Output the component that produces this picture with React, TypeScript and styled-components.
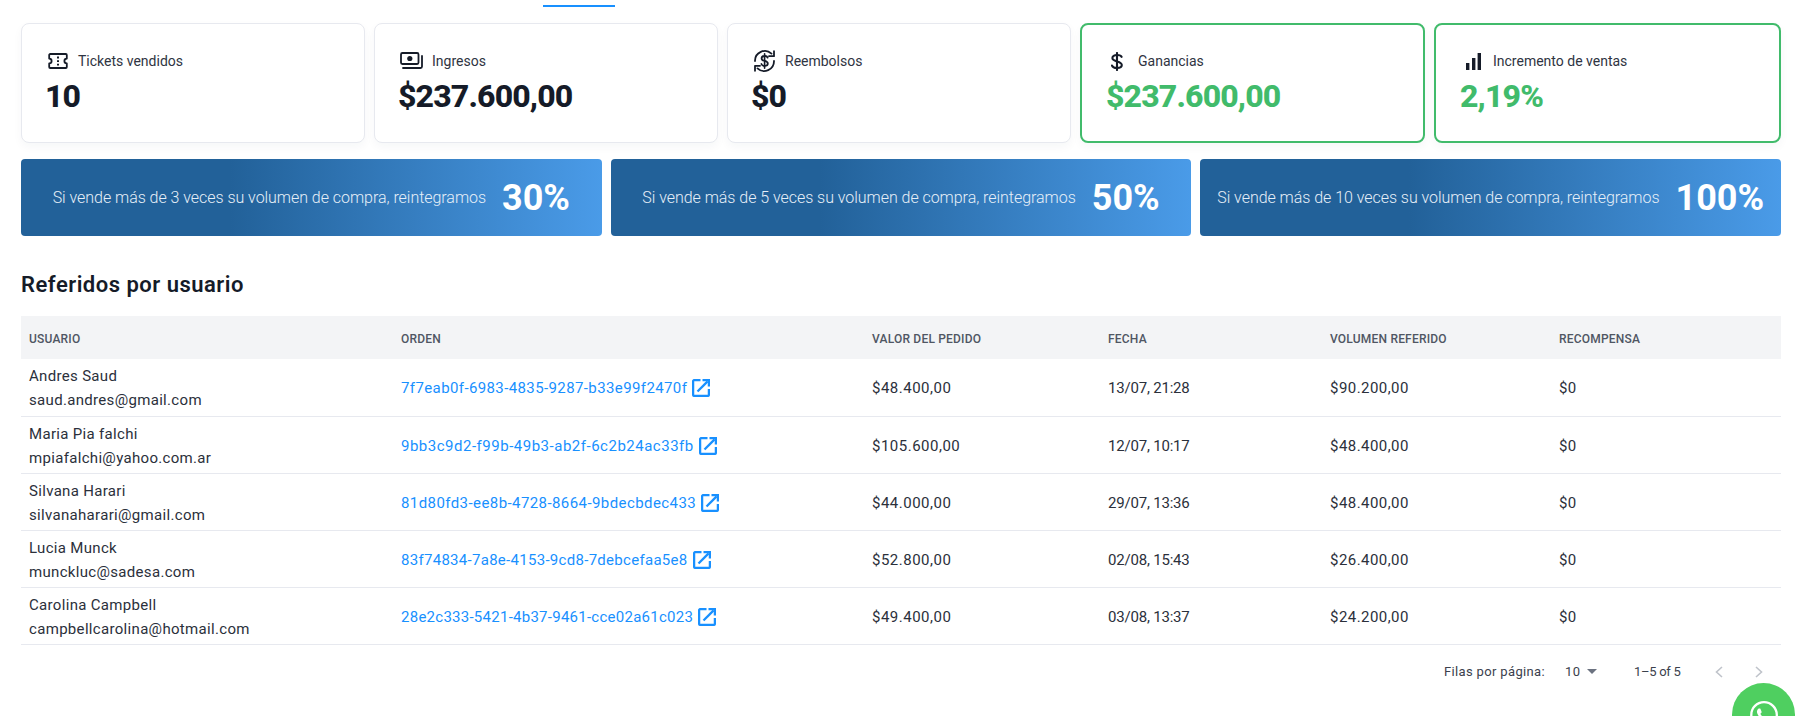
import React from "react";
import styled, { createGlobalStyle } from "styled-components";
import { FaWhatsapp } from "react-icons/fa";

const Global = createGlobalStyle`
  html, body { margin: 0; padding: 0; background: #fff; height: 100%; overflow: hidden; }
  * { box-sizing: border-box; }
  body { font-family: Roboto, "Liberation Sans", sans-serif; color: #2b303b; }
`;

const Page = styled.div`
  padding: 0 32px 0 21px;
  height: 716px;
  position: relative;
  overflow: hidden;
`;
const TabBar = styled.div`
  height: 7px;
  padding: 5px 0 0 522px;
`;
const TabIndicator = styled.div`
  width: 72px;
  height: 2px;
  background: #1890ff;
`;
const CardRow = styled.div`
  display: grid;
  grid-template-columns: 344px 344px 344px 345px 1fr;
  gap: 9px;
  margin-top: 16px;
`;
const Card = styled.div<{ $hl?: boolean }>`
  height: 120px;
  border-radius: 8px;
  background: #fff;
  border: ${(p) => (p.$hl ? "2px solid #41bb6b" : "1px solid #e7e9ef")};
  box-shadow: 0 4px 10px rgba(30, 40, 70, 0.04);
  padding: ${(p) => (p.$hl ? "23px 0 0 24px" : "24px 0 0 25px")};
`;
const CardHead = styled.div<{ $pad: number; $gap: number }>`
  display: flex;
  align-items: center;
  height: 26px;
  padding-left: ${(p) => p.$pad}px;
  gap: ${(p) => p.$gap}px;
  font-size: 14px;
  color: #2f3442;
`;
const IconSlot = styled.span<{ $w: number }>`
  width: ${(p) => p.$w}px;
  display: flex;
  justify-content: center;
  flex: none;
  color: #151b28;
`;
const CardValue = styled.div<{ $hl?: boolean }>`
  font-size: 32px;
  line-height: 38px;
  margin: 3px 0 0 ${(p) => (p.$hl ? "0" : "-2px")};
  font-weight: 800;
  letter-spacing: -0.85px;
  color: ${(p) => (p.$hl ? "#41bb6b" : "#151b28")};
`;
const BannerRow = styled.div`
  display: grid;
  grid-template-columns: repeat(3, 1fr);
  gap: 9px;
  margin-top: 16px;
`;
const Banner = styled.div`
  height: 77px;
  border-radius: 4px;
  background: linear-gradient(90deg, #226199 0%, #226199 36%, #4a9be8 100%);
  color: #fff;
  display: flex;
  align-items: center;
  justify-content: center;
  gap: 16px;
`;
const BannerText = styled.span`
  font-size: 16px;
  font-weight: 300;
  letter-spacing: -0.04px;
  color: #e6eff8;
`;
const BannerPct = styled.span`
  font-size: 36px;
  font-weight: 700;
  color: #fff;
`;
const Title = styled.h2`
  margin: 35px 0 17px;
  font-size: 22px;
  line-height: 28px;
  font-weight: 600;
  letter-spacing: 0.5px;
  color: #151b28;
`;
const Table = styled.table`
  width: 100%;
  table-layout: fixed;
  border-collapse: collapse;
`;
const Col = styled.col<{ $w: number }>`
  width: ${(p) => p.$w}px;
`;
const HeadCell = styled.th`
  height: 43px;
  background: #f3f4f6;
  padding: 3px 8px 0;
  text-align: left;
  font-size: 12px;
  font-weight: 500;
  letter-spacing: 0.2px;
  text-transform: uppercase;
  color: #4f5663;
`;
const Row = styled.tr`
  height: 57px;
  border-bottom: 1px solid #e7e9ef;
`;
const Cell = styled.td<{ $ls?: number }>`
  padding: 2px 8px 0;
  font-size: 15px;
  line-height: 24px;
  letter-spacing: ${(p) => p.$ls ?? 0.32}px;
  color: #2b303b;
`;
const Line = styled.div`
  white-space: nowrap;
`;
const OrderLink = styled.a<{ $ls: number }>`
  display: inline-flex;
  align-items: center;
  gap: 5px;
  color: #1890ff;
  font-size: 15px;
  letter-spacing: ${(p) => p.$ls}px;
  text-decoration: none;
`;
const Pager = styled.div`
  display: flex;
  align-items: center;
  height: 54px;
  font-size: 13px;
  letter-spacing: 0.35px;
  color: #3b414d;
  padding-left: 1423px;
`;
const PagerLabel = styled.span`
  flex: 0 0 121px;
  white-space: nowrap;
`;
const PagerSelect = styled.span`
  flex: 0 0 69px;
  display: flex;
  align-items: center;
  gap: 7px;
`;
const PagerCount = styled.span`
  flex: 0 0 81px;
  white-space: nowrap;
  letter-spacing: -0.3px;
`;
const PagerArrow = styled.svg`
  width: 8px;
  height: 12px;
  margin-right: 32px;
  flex: none;
  fill: none;
  stroke: #bfc3ca;
  stroke-width: 1.6;
`;
const Fab = styled.div`
  position: absolute;
  left: 1732px;
  top: 683px;
  width: 63px;
  height: 63px;
  border-radius: 50%;
  background: #4fcf60;
  color: #fff;
  display: flex;
  align-items: center;
  justify-content: center;
`;

const TicketIcon = () => (
  <svg width="20" height="16" viewBox="0 0 20 16" fill="none" stroke="currentColor" strokeWidth="1.8" strokeLinejoin="round">
    <path d="M2.2 1h15.6a1 1 0 0 1 1 1v3.6a2.4 2.4 0 0 0 0 4.8V14a1 1 0 0 1-1 1H2.2a1 1 0 0 1-1-1v-3.6a2.4 2.4 0 0 0 0-4.8V2a1 1 0 0 1 1-1Z" />
    <path d="M10 3.6v1.8M10 7.2v1.8M10 10.8v1.8" strokeWidth="2" />
  </svg>
);
const MoneyIcon = () => (
  <svg width="23" height="18" viewBox="0 0 23 18" fill="none" stroke="currentColor" strokeWidth="1.8">
    <rect x="1" y="1" width="17.5" height="11" rx="1.4" />
    <circle cx="9.8" cy="6.5" r="2.6" fill="currentColor" stroke="none" />
    <path d="M22 4v10.5a1.5 1.5 0 0 1-1.5 1.5H3" strokeLinecap="round" />
  </svg>
);
const RefundIcon = () => (
  <svg width="23" height="24" viewBox="0 0 23 24" fill="none" stroke="currentColor" strokeWidth="1.8" strokeLinecap="round" strokeLinejoin="round">
    <path d="M2 12A9.8 9.8 0 0 1 18.5 4.6" />
    <path d="M21 12A9.8 9.8 0 0 1 4.5 19.4" />
    <path d="M21 2.2v5h-5" />
    <path d="M2 21.8v-5h5" />
    <path d="M14.6 8.6a2.8 2.3 0 0 0-3-1.6c-1.8 0-3 1-3 2.4 0 3.2 6.2 1.9 6.2 5 0 1.5-1.4 2.4-3.2 2.4a3 3 0 0 1-3.2-1.8" />
    <path d="M11.6 4.8v14.4" strokeWidth="1.6" />
  </svg>
);
const DollarIcon = () => (
  <svg width="12" height="19" viewBox="0 0 12 19" fill="none" stroke="currentColor" strokeWidth="2.1" strokeLinecap="round">
    <path d="M6 1v17" />
    <path d="M10.6 4.8C10.2 3.6 8.6 3 6 3 3.2 3 1.4 4.2 1.4 6c0 4.4 9.4 2.4 9.4 7 0 1.8-2 3-4.8 3-2.8 0-4.5-.9-5-2.4" />
  </svg>
);
const BarsIcon = () => (
  <svg width="15" height="17" viewBox="0 0 15 17" fill="currentColor">
    <rect x="0" y="10" width="3.4" height="7" />
    <rect x="6" y="5" width="3.4" height="12" />
    <rect x="11.6" y="0" width="3.4" height="17" />
  </svg>
);
const ExternalIcon = () => (
  <svg width="18" height="18" viewBox="0 0 18 18" fill="none" stroke="currentColor" strokeWidth="2.3">
    <path d="M8.5 1.1H2.3A1.2 1.2 0 0 0 1.1 2.3v13.4a1.2 1.2 0 0 0 1.2 1.2h13.4a1.2 1.2 0 0 0 1.2-1.2V10" />
    <path d="M5.5 12.5 15.6 2.4" />
    <path d="M10.5 1.1h6.4v6.4" />
  </svg>
);

type CardData = { icon: React.ReactNode; w: number; pad: number; gap: number; label: string; value: string; hl?: boolean };
const cards: CardData[] = [
  { icon: <TicketIcon />, w: 20, pad: 1, gap: 10, label: "Tickets vendidos", value: "10" },
  { icon: <MoneyIcon />, w: 23, pad: 0, gap: 9, label: "Ingresos", value: "$237.600,00" },
  { icon: <RefundIcon />, w: 23, pad: 0, gap: 9, label: "Reembolsos", value: "$0" },
  { icon: <DollarIcon />, w: 12, pad: 5, gap: 15, label: "Ganancias", value: "$237.600,00", hl: true },
  { icon: <BarsIcon />, w: 15, pad: 6, gap: 12, label: "Incremento de ventas", value: "2,19%", hl: true },
];
const banners = [
  ["3", "30%"],
  ["5", "50%"],
  ["10", "100%"],
];
const rows = [
  { name: "Andres Saud", mail: "saud.andres@gmail.com", order: "7f7eab0f-6983-4835-9287-b33e99f2470f", ls: 0.39, value: "$48.400,00", date: "13/07, 21:28", volume: "$90.200,00" },
  { name: "Maria Pia falchi", mail: "mpiafalchi@yahoo.com.ar", order: "9bb3c9d2-f99b-49b3-ab2f-6c2b24ac33fb", ls: 0.51, value: "$105.600,00", date: "12/07, 10:17", volume: "$48.400,00" },
  { name: "Silvana Harari", mail: "silvanaharari@gmail.com", order: "81d80fd3-ee8b-4728-8664-9bdecbdec433", ls: 0.42, value: "$44.000,00", date: "29/07, 13:36", volume: "$48.400,00" },
  { name: "Lucia Munck", mail: "munckluc@sadesa.com", order: "83f74834-7a8e-4153-9cd8-7debcefaa5e8", ls: 0.29, value: "$52.800,00", date: "02/08, 15:43", volume: "$26.400,00" },
  { name: "Carolina Campbell", mail: "campbellcarolina@hotmail.com", order: "28e2c333-5421-4b37-9461-cce02a61c023", ls: 0.26, value: "$49.400,00", date: "03/08, 13:37", volume: "$24.200,00" },
];
const headers = ["Usuario", "Orden", "Valor del pedido", "Fecha", "Volumen referido", "Recompensa"];
const colWidths = [372, 471, 236, 222, 229, 230];

export default function App() {
  return (
    <Page>
      <Global />
      <TabBar>
        <TabIndicator />
      </TabBar>
      <CardRow>
        {cards.map((c) => (
          <Card key={c.label} $hl={c.hl}>
            <CardHead $pad={c.pad} $gap={c.gap}>
              <IconSlot $w={c.w}>{c.icon}</IconSlot>
              {c.label}
            </CardHead>
            <CardValue $hl={c.hl}>{c.value}</CardValue>
          </Card>
        ))}
      </CardRow>
      <BannerRow>
        {banners.map(([n, pct]) => (
          <Banner key={n}>
            <BannerText>Si vende más de {n} veces su volumen de compra, reintegramos</BannerText>
            <BannerPct>{pct}</BannerPct>
          </Banner>
        ))}
      </BannerRow>
      <Title>Referidos por usuario</Title>
      <Table>
        <colgroup>
          {colWidths.map((w) => (
            <Col key={w} $w={w} />
          ))}
        </colgroup>
        <thead>
          <tr>
            {headers.map((h) => (
              <HeadCell key={h}>{h}</HeadCell>
            ))}
          </tr>
        </thead>
        <tbody>
          {rows.map((r) => (
            <Row key={r.order}>
              <Cell>
                <Line>{r.name}</Line>
                <Line>{r.mail}</Line>
              </Cell>
              <Cell>
                <OrderLink href="#" $ls={r.ls}>
                  {r.order}
                  <ExternalIcon />
                </OrderLink>
              </Cell>
              <Cell $ls={0.5}>{r.value}</Cell>
              <Cell $ls={-0.2}>{r.date}</Cell>
              <Cell $ls={0.45}>{r.volume}</Cell>
              <Cell>$0</Cell>
            </Row>
          ))}
        </tbody>
      </Table>
      <Pager>
        <PagerLabel>Filas por página:</PagerLabel>
        <PagerSelect>
          10
          <svg width="10" height="5" viewBox="0 0 10 5" fill="#6b7280">
            <path d="M0 0h10L5 5z" />
          </svg>
        </PagerSelect>
        <PagerCount>1–5 of 5</PagerCount>
        <PagerArrow viewBox="0 0 8 12">
          <path d="M7 1 1.5 6 7 11" />
        </PagerArrow>
        <PagerArrow viewBox="0 0 8 12">
          <path d="M1 1l5.5 5L1 11" />
        </PagerArrow>
      </Pager>
      <Fab>
        <FaWhatsapp size={32} />
      </Fab>
    </Page>
  );
}
